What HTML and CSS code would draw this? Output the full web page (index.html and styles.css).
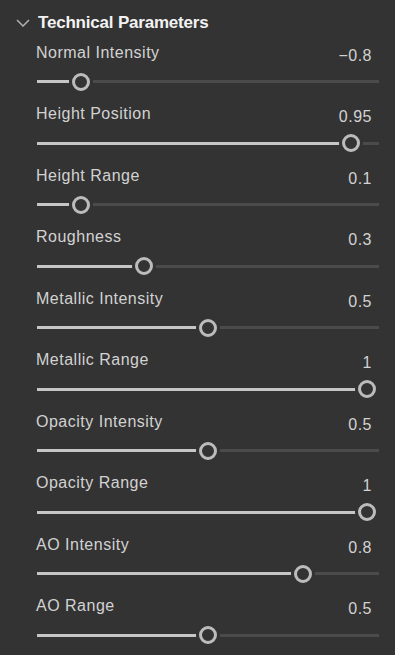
FILE: index.html
```html
<!DOCTYPE html>
<html>
<head>
<meta charset="utf-8">
<link rel="stylesheet" href="styles.css">
</head>
<body>
<div class="panel">
  <div class="header">
    <svg class="chev" width="14" height="8" viewBox="0 0 14 8"><path d="M1 1 L7 7 L13 1" fill="none" stroke="#b0b0b0" stroke-width="1.5"/></svg>
    <span class="title">Technical Parameters</span>
  </div>
  <div class="row"><div class="head"><span class="label">Normal Intensity</span><span class="value">−0.8</span></div><div class="slider" style="--c:43.8px"><div class="track"><div class="fill"></div></div><div class="thumb"></div></div></div>
  <div class="row"><div class="head"><span class="label">Height Position</span><span class="value">0.95</span></div><div class="slider" style="--c:314.1px"><div class="track"><div class="fill"></div></div><div class="thumb"></div></div></div>
  <div class="row"><div class="head"><span class="label">Height Range</span><span class="value">0.1</span></div><div class="slider" style="--c:43.8px"><div class="track"><div class="fill"></div></div><div class="thumb"></div></div></div>
  <div class="row"><div class="head"><span class="label">Roughness</span><span class="value">0.3</span></div><div class="slider" style="--c:107.4px"><div class="track"><div class="fill"></div></div><div class="thumb"></div></div></div>
  <div class="row"><div class="head"><span class="label">Metallic Intensity</span><span class="value">0.5</span></div><div class="slider" style="--c:171px"><div class="track"><div class="fill"></div></div><div class="thumb"></div></div></div>
  <div class="row"><div class="head"><span class="label">Metallic Range</span><span class="value">1</span></div><div class="slider" style="--c:330px"><div class="track"><div class="fill"></div></div><div class="thumb"></div></div></div>
  <div class="row"><div class="head"><span class="label">Opacity Intensity</span><span class="value">0.5</span></div><div class="slider" style="--c:171px"><div class="track"><div class="fill"></div></div><div class="thumb"></div></div></div>
  <div class="row"><div class="head"><span class="label">Opacity Range</span><span class="value">1</span></div><div class="slider" style="--c:330px"><div class="track"><div class="fill"></div></div><div class="thumb"></div></div></div>
  <div class="row"><div class="head"><span class="label">AO Intensity</span><span class="value">0.8</span></div><div class="slider" style="--c:266.4px"><div class="track"><div class="fill"></div></div><div class="thumb"></div></div></div>
  <div class="row"><div class="head"><span class="label">AO Range</span><span class="value">0.5</span></div><div class="slider" style="--c:171px"><div class="track"><div class="fill"></div></div><div class="thumb"></div></div></div>
</div>
</body>
</html>
```
FILE: styles.css
```css
html, body {
  margin: 0;
  padding: 0;
  background: #333333;
  width: 395px;
  height: 655px;
  overflow: hidden;
}
.panel {
  font-family: "Liberation Sans", Arial, sans-serif;
  padding: 13px 16px 0 37px;
}
.header {
  display: flex;
  align-items: center;
  height: 20px;
  margin-left: -21px;
  margin-bottom: 9.5px;
}
.chev {
  display: block;
  margin-right: 8px;
  margin-top: -1px;
}
.title {
  font-size: 17px;
  line-height: 20px;
  font-weight: bold;
  color: #f2f2f2;
  letter-spacing: -0.2px;
}
.row {
  height: 61.5px;
  width: 342px;
}
.head {
  display: flex;
  justify-content: space-between;
  height: 20px;
}
.label, .value {
  font-size: 16px;
  line-height: 20px;
  letter-spacing: 0.5px;
  color: #d2d2d2;
}
.label {
  margin-left: -1px;
}
.value {
  padding-top: 3px;
  margin-right: 7px;
}
.slider {
  position: relative;
  height: 18px;
  margin-top: 10px;
}
.track {
  position: relative;
  top: 7.5px;
  height: 3px;
  background: #4b4b4b;
}
.fill {
  height: 3px;
  width: var(--c);
  background: #c6c6c6;
}
.thumb {
  position: absolute;
  top: 0;
  left: calc(var(--c) - 9px);
  width: 18px;
  height: 18px;
  box-sizing: border-box;
  border: 3.5px solid #bcbcbc;
  border-radius: 50%;
  background: #333333;
  box-shadow: 0 0 0 3px #333333;
}
```
